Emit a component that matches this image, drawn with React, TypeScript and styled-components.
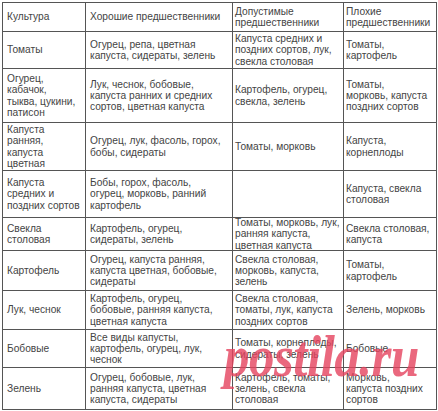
import React from "react";
import styled, { createGlobalStyle } from "styled-components";

const GlobalStyle = createGlobalStyle`
  html, body {
    margin: 0;
    padding: 0;
    background: #fff;
  }
  body {
    font-family: "Liberation Sans", Arial, sans-serif;
  }
`;

const Page = styled.div`
  position: relative;
  width: 438px;
  height: 411px;
  padding: 2px;
  box-sizing: border-box;
  overflow: hidden;
`;

const Table = styled.div`
  width: 435px;
  border-left: 1px solid #555;
  border-top: 1px solid #555;
  box-sizing: border-box;
`;

const Row = styled.div<{ $h: number }>`
  display: grid;
  grid-template-columns: 83px 147px 111px 93px;
  height: ${({ $h }) => $h}px;
`;

const Cell = styled.div<{ $pad: number }>`
  display: flex;
  align-items: center;
  border-right: 1px solid #555;
  border-bottom: 1px solid #555;
  padding-left: ${({ $pad }) => $pad}px;
  font-size: 10.2px;
  line-height: 11.3px;
  color: #444;
  white-space: nowrap;
  overflow: hidden;
`;

const Watermark = styled.div`
  position: absolute;
  left: 224px;
  top: 335px;
  font-family: "Liberation Serif", "Times New Roman", serif;
  font-style: italic;
  font-weight: bold;
  font-size: 51px;
  line-height: 50px;
  letter-spacing: -0.5px;
  color: #e6435e;
  opacity: 0.8;
  transform: scaleY(1.15);
  transform-origin: left bottom;
  pointer-events: none;
`;

const paddings = [4, 4, 2, 2];

interface TableRow {
  height: number;
  cells: string[][];
}

const rows: TableRow[] = [
  {
    height: 29,
    cells: [
      ["Культура"],
      ["Хорошие предшественники"],
      ["Допустимые", "предшественники"],
      ["Плохие", "предшественники"],
    ],
  },
  {
    height: 37,
    cells: [
      ["Томаты"],
      ["Огурец, репа, цветная", "капуста, сидераты, зелень"],
      ["Капуста средних и", "поздних сортов, лук,", "свекла столовая"],
      ["Томаты,", "картофель"],
    ],
  },
  {
    height: 54,
    cells: [
      ["Огурец,", "кабачок,", "тыква, цукини,", "патисон"],
      ["Лук, чеснок, бобовые,", "капуста ранних и средних", "сортов, цветная капуста"],
      ["Картофель, огурец,", "свекла, зелень"],
      ["Томаты,", "морковь, капуста", "поздних сортов"],
    ],
  },
  {
    height: 48,
    cells: [
      ["Капуста", "ранняя,", "капуста", "цветная"],
      ["Огурец, лук, фасоль, горох,", "бобы, сидераты"],
      ["Томаты, морковь"],
      ["Капуста,", "корнеплоды"],
    ],
  },
  {
    height: 47,
    cells: [
      ["Капуста", "средних и", "поздних сортов"],
      ["Бобы, горох, фасоль,", "огурец, морковь, ранний", "картофель"],
      [],
      ["Капуста, свекла", "столовая"],
    ],
  },
  {
    height: 33,
    cells: [
      ["Свекла", "столовая"],
      ["Картофель, огурец,", "сидераты, зелень"],
      ["Томаты, морковь, лук,", "ранняя капуста,", "цветная капуста"],
      ["Свекла столовая,", "капуста"],
    ],
  },
  {
    height: 40,
    cells: [
      ["Картофель"],
      ["Огурец, капуста ранняя,", "капуста цветная, бобовые,", "сидераты"],
      ["Свекла столовая,", "морковь, капуста,", "зелень"],
      ["Томаты,", "картофель"],
    ],
  },
  {
    height: 39,
    cells: [
      ["Лук, чеснок"],
      ["Картофель, огурец,", "бобовые, ранняя капуста,", "цветная капуста"],
      ["Свекла столовая,", "томаты, лук, капуста", "поздних сортов"],
      ["Зелень, морковь"],
    ],
  },
  {
    height: 38,
    cells: [
      ["Бобовые"],
      ["Все виды капусты,", "картофель, огурец, лук,", "чеснок"],
      ["Томаты, корнеплоды,", "сидераты, зелень"],
      ["Бобовые"],
    ],
  },
  {
    height: 42,
    cells: [
      ["Зелень"],
      ["Огурец, бобовые, лук,", "ранняя капуста, цветная", "капуста, сидераты"],
      ["Картофель, томаты,", "зелень, свекла", "столовая"],
      ["Морковь,", "капуста поздних", "сортов"],
    ],
  },
];

function CellText({ lines }: { lines: string[] }) {
  return (
    <div>
      {lines.map((line, i) => (
        <React.Fragment key={i}>
          {i > 0 && <br />}
          {line}
        </React.Fragment>
      ))}
    </div>
  );
}

export default function App() {
  return (
    <>
      <GlobalStyle />
      <Page>
        <Table>
          {rows.map((row, r) => (
            <Row $h={row.height} key={`row-${r}`}>
              {row.cells.map((lines, c) => (
                <Cell $pad={paddings[c]} key={`cell-${r}-${c}`}>
                  <CellText lines={lines} />
                </Cell>
              ))}
            </Row>
          ))}
        </Table>
        <Watermark>postila.ru</Watermark>
      </Page>
    </>
  );
}
